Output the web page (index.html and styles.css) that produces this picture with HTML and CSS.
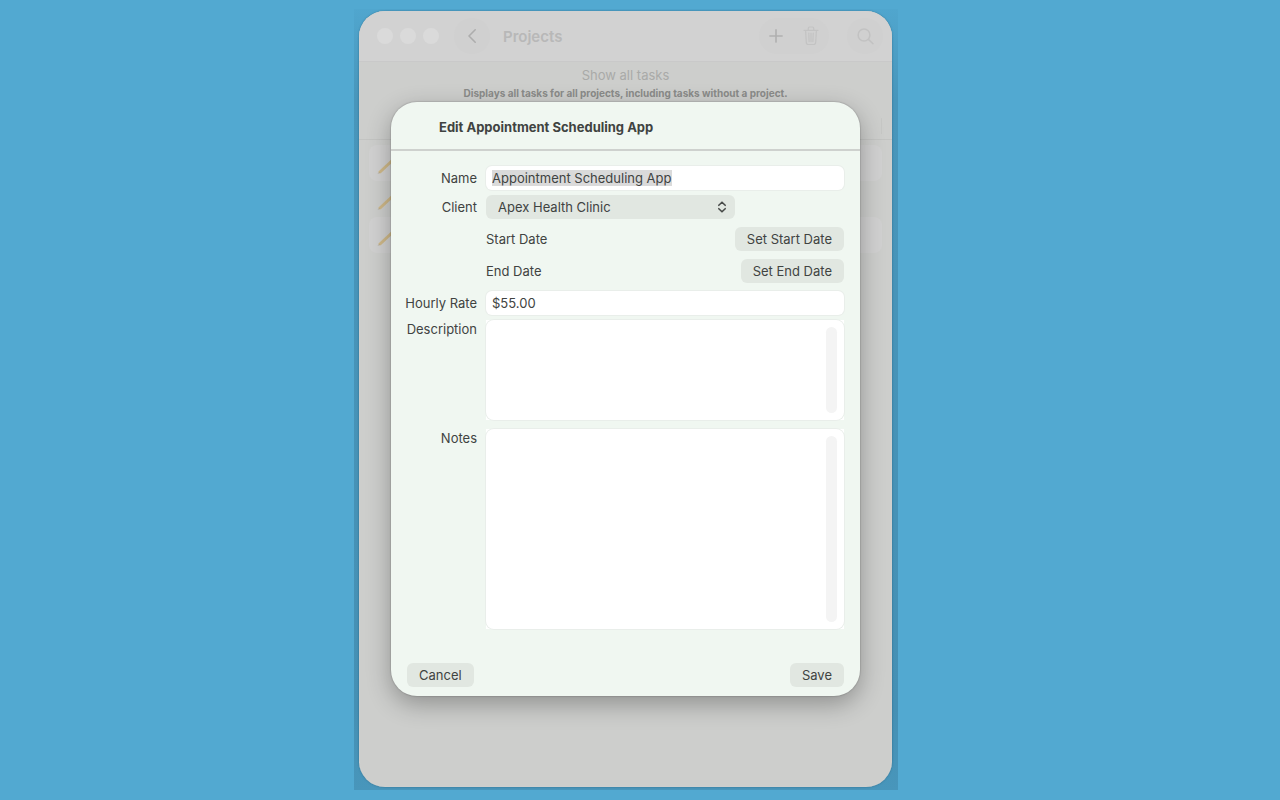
FILE: index.html
```html
<!DOCTYPE html>
<html lang="en">
<head>
<meta charset="utf-8">
<title>Projects</title>
<link rel="stylesheet" href="styles.css">
</head>
<body class="desktop">
<div class="frame">
  <main class="window">
    <header class="toolbar">
      <div class="lights"><span class="light"></span><span class="light"></span><span class="light"></span></div>
      <button class="tool" type="button" aria-label="Back">
        <svg width="10" height="16" viewBox="0 0 10 16" fill="none" stroke="#adadad" stroke-width="1.6" stroke-linecap="round" stroke-linejoin="round"><path d="M8.2 1.8 2 8l6.2 6.2"/></svg>
      </button>
      <h1 class="toolbar-title">Projects</h1>
      <div class="tool-group">
        <button class="tool-plain" type="button" aria-label="Add">
          <svg width="14" height="14" viewBox="0 0 14 14" fill="none" stroke="#b0b0b0" stroke-width="1.6" stroke-linecap="round"><path d="M7 .9v12.2M.9 7h12.2"/></svg>
        </button>
        <button class="tool-plain" type="button" aria-label="Delete">
          <svg width="16" height="20" viewBox="0 0 16 20" fill="none" stroke="#c3c3c3" stroke-width="1.2" stroke-linecap="round" stroke-linejoin="round"><path d="M1 4.3h14M5.3 4.1V2.3q0-1.3 1.3-1.3h2.8q1.3 0 1.3 1.3v1.8M2.6 4.5l.7 12q.1 2 2.1 2h5.2q2 0 2.1-2l.7-12M5.8 7.2l.3 8.4M8 7.2v8.4M10.2 7.2l-.3 8.4"/></svg>
        </button>
      </div>
      <button class="tool tool-search" type="button" aria-label="Search">
        <svg width="17" height="17" viewBox="0 0 17 17" fill="none" stroke="#c2c2c2" stroke-width="1.5" stroke-linecap="round"><circle cx="7" cy="7" r="5.9"/><path d="m11.4 11.4 4.6 4.4"/></svg>
      </button>
    </header>
    <section class="intro">
      <p class="intro-title">Show all tasks</p>
      <p class="intro-text">Displays all tasks for all projects, including tasks without a project.</p>
      <span class="column-mark"></span>
    </section>
    <ul class="list">
      <li class="item"><svg class="pencil" width="20" height="20" viewBox="0 0 20 20" stroke="#cfb989" stroke-width="3" stroke-linecap="round"><path d="M3 16 18 2"/><path d="m1.6 17.2.6-.6" stroke="#aaa69a" stroke-width="1"/></svg></li>
      <li class="item"><svg class="pencil" width="20" height="20" viewBox="0 0 20 20" stroke="#cfb989" stroke-width="3" stroke-linecap="round"><path d="M3 16 18 2"/><path d="m1.6 17.2.6-.6" stroke="#aaa69a" stroke-width="1"/></svg></li>
      <li class="item"><svg class="pencil" width="20" height="20" viewBox="0 0 20 20" stroke="#cfb989" stroke-width="3" stroke-linecap="round"><path d="M3 16 18 2"/><path d="m1.6 17.2.6-.6" stroke="#aaa69a" stroke-width="1"/></svg></li>
    </ul>
    <form class="sheet" role="dialog" aria-labelledby="sheet-title">
      <h2 class="sheet-title" id="sheet-title">Edit Appointment Scheduling App</h2>
      <div class="fields">
        <div class="row">
          <label class="label" for="name">Name</label>
          <input class="input" id="name" type="text" value="Appointment Scheduling App">
        </div>
        <div class="row">
          <label class="label" for="client">Client</label>
          <div class="picker">
            <select class="select" id="client"><option>Apex Health Clinic</option></select>
            <svg class="chevrons" width="10" height="12" viewBox="0 0 10 12" fill="none" stroke="#484b49" stroke-width="1.6" stroke-linecap="round" stroke-linejoin="round"><path d="M1.8 4.3 5 1.2l3.2 3.1M1.8 7.7 5 10.8l3.2-3.1"/></svg>
          </div>
        </div>
        <div class="row row-date">
          <span class="date-label">Start Date</span>
          <button class="button" type="button">Set Start Date</button>
        </div>
        <div class="row row-date">
          <span class="date-label">End Date</span>
          <button class="button" type="button">Set End Date</button>
        </div>
        <div class="row row-rate">
          <label class="label" for="rate">Hourly Rate</label>
          <input class="input" id="rate" type="text" value="$55.00">
        </div>
        <div class="row">
          <label class="label label-top" for="description">Description</label>
          <div class="text-box"><textarea class="textarea" id="description"></textarea></div>
        </div>
        <div class="row row-notes">
          <label class="label label-top" for="notes">Notes</label>
          <div class="text-box"><textarea class="textarea textarea-tall" id="notes"></textarea></div>
        </div>
      </div>
      <div class="actions">
        <button class="button" type="button">Cancel</button>
        <button class="button" type="submit">Save</button>
      </div>
    </form>
  </main>
</div>
<script src="main.js"></script>
</body>
</html>
```
FILE: main.js
```js
document.getElementById("name").select();
```
FILE: styles.css
```css
* { box-sizing: border-box; margin: 0; }

.desktop {
  display: flex;
  justify-content: center;
  min-height: 100vh;
  padding: 9px 28px 10px 0;
  background: #52a9d1;
  color: #404341;
  font: 13px/16px Inter, "Liberation Sans", sans-serif;
}

.desktop button, .desktop input, .desktop select, .desktop textarea {
  font: inherit;
  color: inherit;
}

.frame {
  display: flex;
  width: 100%;
  max-width: 544px;
  padding: 2px 6px 3px 5px;
  background: linear-gradient(#50a6ce, #4896bb 90px, #4590b4 700px, #4896bb);
}

.window {
  position: relative;
  flex: 1;
  border-radius: 26px;
  background: #cdcecc;
  box-shadow: 0 0 2px rgba(20, 60, 80, .5), inset 0 0 1px #dedede;
}

.toolbar {
  display: flex;
  align-items: center;
  height: 51px;
  padding: 0 9px 0 18px;
  border-bottom: 1px solid #c9c9c9;
  border-radius: 26px 26px 0 0;
  background: #d2d2d2;
}

.lights { display: flex; gap: 7px; }

.light { width: 16px; height: 16px; border-radius: 50%; background: #dadada; }

.tool {
  display: grid;
  place-items: center;
  width: 36px;
  height: 36px;
  margin-left: 15px;
  padding: 0;
  border: 0;
  border-radius: 50%;
  background: #d0d0d0;
}

.toolbar-title { margin-left: 13px; padding-top: 1px; color: #b8b8b8; font-size: 15px; font-weight: 600; line-height: 20px; }

.tool-group {
  display: flex;
  align-items: center;
  gap: 20px;
  height: 36px;
  margin-left: auto;
  padding: 0 10px;
  border-radius: 18px;
  background: #d0d0d0;
}

.tool-plain { display: grid; padding: 0; border: 0; background: none; }

.tool-search { margin-left: 18px; }

.intro {
  position: relative;
  height: 78px;
  padding-top: 4px;
  border-bottom: 1px solid #c3c4c2;
  text-align: center;
}

.intro-title { color: #a9aaa8; line-height: 18px; }

.intro-text { color: #8a8b89; font-size: 10px; font-weight: 700; line-height: 18px; }

.column-mark { position: absolute; right: 10px; bottom: 5px; width: 1px; height: 16px; background: #c6c7c5; }

.list { padding: 5px 10px; list-style: none; }

.item { height: 36px; padding: 11px 8px; border-radius: 8px; }

.item:nth-child(odd) { background: #d1d1d1; }

.pencil { display: block; }

.sheet {
  position: absolute;
  top: 91px;
  right: 32px;
  left: 32px;
  border-radius: 26px;
  background: #f0f7f1;
  box-shadow: 0 0 1px 1px rgba(0, 0, 0, .1), 0 8px 24px rgba(0, 0, 0, .3);
}

.sheet-title {
  padding: 17px 48px 14px;
  border-bottom: 2px solid #ced1ce;
  font-size: 13px;
  font-weight: 700;
  line-height: 16px;
}

.fields { display: grid; padding: 15px 16px 0; }

.row {
  display: grid;
  grid-template-columns: 70px 1fr;
  column-gap: 9px;
  margin-bottom: 5px;
}

.row-date { display: flex; justify-content: space-between; margin: 3px 0 5px; padding-left: 79px; }

.row-rate { margin-top: 3px; }

.row-notes { margin: 4px 0 0; }

.label { align-self: center; justify-self: end; white-space: nowrap; }

.label-top { align-self: start; padding-top: 1px; }

.date-label { align-self: center; }

.input {
  width: 100%;
  height: 24px;
  padding: 0 6px;
  border: 0;
  border-radius: 6px;
  outline: none;
  background: #fff;
  box-shadow: 0 0 0 1px #e9eeea;
}

.input::selection { background: #dadada; color: #404341; }

.picker { position: relative; width: 249px; max-width: 100%; }

.select {
  display: block;
  width: 100%;
  height: 24px;
  padding: 0 30px 0 12px;
  border: 0;
  border-radius: 6px;
  background: #e1e7e1;
  appearance: none;
}

.chevrons { position: absolute; top: 6px; right: 8px; pointer-events: none; }

.button {
  height: 24px;
  padding: 0 12px;
  border: 0;
  border-radius: 6px;
  background: #e1e7e1;
}

.text-box { position: relative; background: #fff; }

.text-box::after {
  content: "";
  position: absolute;
  top: 7px;
  right: 7px;
  bottom: 7px;
  width: 11px;
  border-radius: 6px;
  background: #f4f4f4;
}

.textarea {
  display: block;
  width: 100%;
  height: 100px;
  padding: 4px 24px 4px 6px;
  border: 0;
  border-radius: 8px;
  outline: none;
  background: #fff;
  box-shadow: 0 0 0 1px #e9eeea;
  resize: none;
}

.textarea-tall { height: 200px; }

.actions { display: flex; justify-content: space-between; padding: 34px 16px 9px; }
```
